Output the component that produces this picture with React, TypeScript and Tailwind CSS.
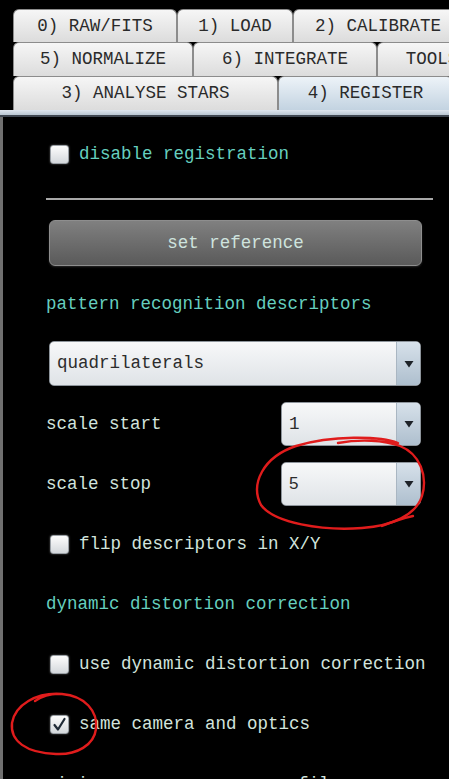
import React from "react";

const MONO = "font-[family-name:'Liberation_Mono','Courier_New',monospace]";

function Tab({ label, width, active }: { label: string; width: number; active?: boolean }) {
  return (
    <div
      style={{ width }}
      className={
        "flex h-full shrink-0 items-center justify-center rounded-t-[6px] border border-b-0 border-[#8c8c8c] text-[17.5px] text-[#2a2a2a] " +
        (active
          ? "bg-gradient-to-b from-[#edf3f8] to-[#c3d3e1]"
          : "bg-gradient-to-b from-[#f6f6f6] to-[#dcdcdc]")
      }
    >
      {label}
    </div>
  );
}

function Checkbox({ checked }: { checked?: boolean }) {
  return (
    <span className="flex h-[19px] w-[19px] shrink-0 items-center justify-center rounded-[3px] border border-[#9aa0a6] bg-gradient-to-b from-[#fdfdfd] to-[#d4d8dc] shadow-[0_0_2px_rgba(255,255,255,0.4)]">
      {checked && (
        <svg width="15" height="15" viewBox="0 0 15 15">
          <path d="M2.5 8 L6 12.5 L12.5 2" fill="none" stroke="#1f2a36" strokeWidth="2.2" strokeLinecap="round" strokeLinejoin="round" />
        </svg>
      )}
    </span>
  );
}

function Combo({ value, sans, className }: { value: string; sans?: boolean; className?: string }) {
  return (
    <div className={"flex overflow-hidden rounded-[5px] border border-[#8d949b] bg-gradient-to-b from-[#f7f8f9] to-[#dfe3e7] " + className}>
      <div
        className={
          "flex flex-1 items-center pl-[7px] text-[#2c2c2c] " +
          (sans ? "font-[family-name:'Liberation_Sans',Arial,sans-serif] text-[17px]" : "text-[17.5px]")
        }
      >
        {value}
      </div>
      <div className="flex w-[24px] items-center justify-center border-l border-[#a9b6c2] bg-gradient-to-b from-[#d7e1ea] to-[#aebfce]">
        <svg width="10" height="8" viewBox="0 0 10 8">
          <path d="M0.5 1 L9.5 1 L5 7.5 Z" fill="#1d2228" />
        </svg>
      </div>
    </div>
  );
}

export default function App() {
  return (
    <div className={"relative h-[779px] w-[449px] overflow-hidden bg-black " + MONO}>
      <div className="flex flex-col pl-[13px] pt-[9px]">
        <div className="flex h-[33px]">
          <Tab label="0) RAW/FITS" width={164} />
          <Tab label="1) LOAD" width={116} />
          <Tab label="2) CALIBRATE" width={170} />
        </div>
        <div className="flex h-[34px]">
          <Tab label="5) NORMALIZE" width={180} />
          <Tab label="6) INTEGRATE" width={184} />
          <Tab label="TOOLS" width={110} />
        </div>
        <div className="flex h-[34px]">
          <Tab label="3) ANALYSE STARS" width={265} />
          <Tab label="4) REGISTER" width={175} active />
        </div>
      </div>
      <div className="h-[7px] border-b-2 border-[#3f4650] bg-gradient-to-b from-[#dfe6ee] to-[#bac6d2]" />

      <div className="flex h-[700px] flex-col border-l-[3px] border-[#707070] pl-[43px] pr-[16px] pt-[7px] text-[17.5px]">
        <label className="flex h-[60px] shrink-0 items-center gap-[10px] pl-[4px] text-[#66cfbf]">
          <Checkbox />
          disable registration
        </label>
        <div className="mt-[14px] h-[2px] shrink-0 bg-[#a8a8a8]" />
        <button className="ml-[3px] mr-[11px] mt-[20px] flex h-[46px] shrink-0 items-center justify-center rounded-[6px] border border-[#8e8e8e] bg-gradient-to-b from-[#808080] to-[#5a5a5a] text-[17.5px] text-[#cfe3de] shadow-[0_1px_2px_rgba(255,255,255,0.15)]">
          set reference
        </button>
        <div className="mt-[8px] flex h-[60px] shrink-0 items-center text-[#66cfbf]">pattern recognition descriptors</div>
        <Combo value="quadrilaterals" className="ml-[3px] mr-[12px] mt-[7px] h-[45px] shrink-0" />
        <div className="mt-[8px] flex h-[60px] shrink-0 items-center justify-between pr-[12px] text-[#d2e4dd]">
          <span>scale start</span>
          <Combo value="1" className="h-[44px] w-[140px]" />
        </div>
        <div className="flex h-[60px] shrink-0 items-center justify-between pr-[12px] text-[#d2e4dd]">
          <span>scale stop</span>
          <Combo value="5" sans className="h-[44px] w-[140px]" />
        </div>
        <label className="flex h-[60px] shrink-0 items-center gap-[10px] pl-[4px] text-[#d2e4dd]">
          <Checkbox />
          flip descriptors in X/Y
        </label>
        <div className="flex h-[60px] shrink-0 items-center text-[#66cfbf]">dynamic distortion correction</div>
        <label className="flex h-[60px] shrink-0 items-center gap-[10px] pl-[4px] text-[#d2e4dd]">
          <Checkbox />
          use dynamic distortion correction
        </label>
        <label className="flex h-[60px] shrink-0 items-center gap-[10px] pl-[4px] text-[#d2e4dd]">
          <Checkbox checked />
          same camera and optics
        </label>
        <div className="flex h-[60px] shrink-0 items-center text-[#d2e4dd]">mixing camera sensor profile</div>
      </div>

      {/* red hand-drawn annotations */}
      <svg className="pointer-events-none absolute left-0 top-0" width="449" height="779" viewBox="0 0 449 779">
        <g fill="none" stroke="#e01c1c" strokeWidth="2.4" strokeLinecap="round" strokeLinejoin="round">
          <path d="M398 443 C380 436 332 435 296 446 C263 457 250 484 261 505 C274 523 322 531 362 528 C392 526 416 515 422 496 C428 476 420 454 400 446 C384 440 360 439 338 443" />
          <path d="M382 526 C394 521 404 518 413 516" />
          <path d="M62 694 C36 692 15 705 12 723 C10 741 26 753 56 754 C77 755 94 745 96 729 C98 711 85 696 62 694 C50 693 41 697 35 701" />
        </g>
      </svg>
    </div>
  );
}
